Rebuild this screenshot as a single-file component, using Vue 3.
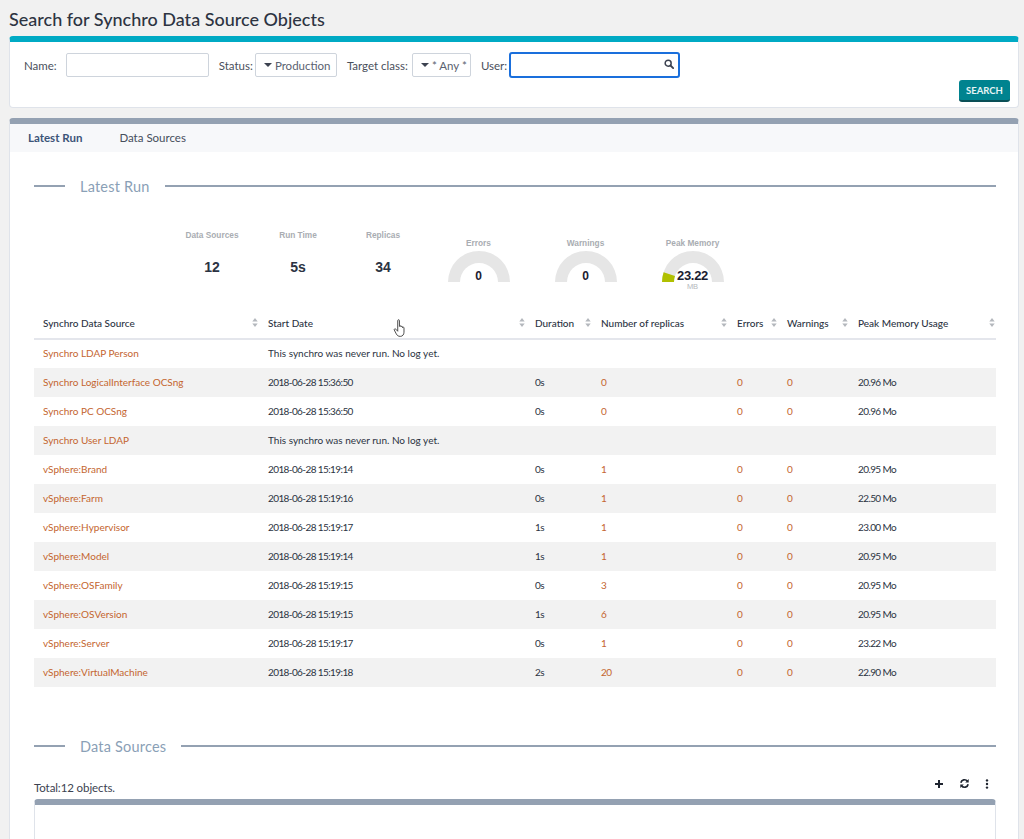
<script setup>
const counters = [
  { label: 'Data Sources', value: '12' },
  { label: 'Run Time', value: '5s' },
  { label: 'Replicas', value: '34' }
]

const gauges = [
  { label: 'Errors', value: '0' },
  { label: 'Warnings', value: '0' },
  { label: 'Peak Memory', value: '23.22', unit: 'MB', fill: true }
]

const columns = ['Synchro Data Source', 'Start Date', 'Duration', 'Number of replicas', 'Errors', 'Warnings', 'Peak Memory Usage']

const rows = [
  { name: 'Synchro LDAP Person', never: true },
  { name: 'Synchro LogicalInterface OCSng', date: '2018-06-28 15:36:50', time: '0s', replicas: 0, memory: '20.96 Mo' },
  { name: 'Synchro PC OCSng', date: '2018-06-28 15:36:50', time: '0s', replicas: 0, memory: '20.96 Mo' },
  { name: 'Synchro User LDAP', never: true },
  { name: 'vSphere:Brand', date: '2018-06-28 15:19:14', time: '0s', replicas: 1, memory: '20.95 Mo' },
  { name: 'vSphere:Farm', date: '2018-06-28 15:19:16', time: '0s', replicas: 1, memory: '22.50 Mo' },
  { name: 'vSphere:Hypervisor', date: '2018-06-28 15:19:17', time: '1s', replicas: 1, memory: '23.00 Mo' },
  { name: 'vSphere:Model', date: '2018-06-28 15:19:14', time: '1s', replicas: 1, memory: '20.95 Mo' },
  { name: 'vSphere:OSFamily', date: '2018-06-28 15:19:15', time: '0s', replicas: 3, memory: '20.95 Mo' },
  { name: 'vSphere:OSVersion', date: '2018-06-28 15:19:15', time: '1s', replicas: 6, memory: '20.95 Mo' },
  { name: 'vSphere:Server', date: '2018-06-28 15:19:17', time: '0s', replicas: 1, memory: '23.22 Mo' },
  { name: 'vSphere:VirtualMachine', date: '2018-06-28 15:19:18', time: '2s', replicas: 20, memory: '22.90 Mo' }
]
</script>

<template>
  <div class="page">
    <h1 class="title">Search for Synchro Data Source Objects</h1>

    <form class="search-card" @submit.prevent>
      <div class="criteria">
        <label class="crit crit-name">Name:<span class="input name-input"></span></label>
        <label class="crit crit-status">Status:<span class="input select status-select"><i class="caret"></i>Production</span></label>
        <label class="crit crit-class">Target class:<span class="input select class-select"><i class="caret"></i>* Any *</span></label>
        <label class="crit crit-user">User:<span class="input user-input">
          <svg class="lens" viewBox="0 0 12 12" width="10" height="10">
            <circle cx="5" cy="5" r="3.6" fill="none" stroke="#3c4250" stroke-width="1.8" />
            <path d="M7.8 7.8 11 11" stroke="#3c4250" stroke-width="2.2" stroke-linecap="round" />
          </svg>
        </span></label>
      </div>
      <div class="search-actions">
        <button type="submit" class="search-btn">SEARCH</button>
      </div>
    </form>

    <section class="main-card">
      <nav class="tabs">
        <span class="tab active">Latest Run</span>
        <span class="tab">Data Sources</span>
      </nav>

      <div class="tab-body">
        <div class="legend"><span>Latest Run</span></div>

        <div class="stats">
          <div v-for="c in counters" :key="c.label" class="counter">
            <div class="stat-label">{{ c.label }}</div>
            <div class="counter-value">{{ c.value }}</div>
          </div>
          <div v-for="g in gauges" :key="g.label" class="gauge">
            <div class="stat-label">{{ g.label }}</div>
            <div class="gauge-dial">
              <svg viewBox="0 0 62 31" width="62" height="31">
                <path d="M0 31A31 31 0 0 1 62 31H50A19 19 0 0 0 12 31Z" fill="#e6e6e6" />
                <path v-if="g.fill" d="M0 31A31 31 0 0 1 1.6 21.2L13 25A19 19 0 0 0 12 31Z" fill="#b0c000" />
              </svg>
              <span class="gauge-value" :class="{ big: g.fill }">{{ g.value }}</span>
            </div>
            <div v-if="g.unit" class="gauge-unit">{{ g.unit }}</div>
          </div>
        </div>

        <table class="runs">
          <thead>
            <tr>
              <th v-for="col in columns" :key="col">
                {{ col }}
                <svg class="sort" viewBox="0 0 6 10" width="6" height="9">
                  <path d="M3 0 6 4H0ZM3 10 0 6H6Z" fill="#b4b8bd" />
                </svg>
              </th>
            </tr>
          </thead>
          <tbody>
            <tr v-for="row in rows" :key="row.name">
              <td><a class="link">{{ row.name }}</a></td>
              <template v-if="row.never">
                <td>This synchro was never run. No log yet.</td>
                <td></td><td></td><td></td><td></td><td></td>
              </template>
              <template v-else>
                <td class="num">{{ row.date }}</td>
                <td class="num">{{ row.time }}</td>
                <td class="num"><a class="link">{{ row.replicas }}</a></td>
                <td class="num"><a class="link">0</a></td>
                <td class="num"><a class="link">0</a></td>
                <td class="num">{{ row.memory }}</td>
              </template>
            </tr>
          </tbody>
        </table>

        <div class="legend second"><span>Data Sources</span></div>

        <div class="list-head">
          <span class="total">Total:12 objects.</span>
          <div class="toolkit">
            <svg viewBox="0 0 10 10" width="10" height="10">
              <path d="M5 1v8M1 5h8" stroke="#1f2530" stroke-width="2" />
            </svg>
            <svg viewBox="0 0 12 12" width="11" height="11">
              <path d="M2 5.2A4.1 4.1 0 0 1 9.2 3.4M10 6.8A4.1 4.1 0 0 1 2.8 8.6" fill="none" stroke="#1f2530" stroke-width="1.8" />
              <path d="M10.6 1v4H6.8ZM1.4 11V7h3.8Z" fill="#1f2530" />
            </svg>
            <svg viewBox="0 0 4 10" width="4" height="10">
              <circle cx="2" cy="1.4" r="1.2" fill="#1f2530" />
              <circle cx="2" cy="5" r="1.2" fill="#1f2530" />
              <circle cx="2" cy="8.6" r="1.2" fill="#1f2530" />
            </svg>
          </div>
        </div>
        <div class="list-panel"></div>
      </div>

      <svg class="pointer" viewBox="0 0 14 20" width="14" height="19">
        <path d="M4.6 1.6c0-1.1 1.8-1.1 1.8 0v6.2c0-1 1.6-1 1.6 0v.6c0-1 1.6-1 1.6 0v.8c0-.9 1.6-.9 1.6.1v4.6c0 2.4-1.4 4.4-3.9 4.4-2.2 0-3.3-1-4.2-2.6L1 11.6c-.5-1 .8-1.8 1.6-.9l2 2.2Z" fill="#fff" stroke="#444" stroke-width="1" stroke-linejoin="round" />
      </svg>
    </section>
  </div>
</template>

<style>
html, body {
  margin: 0;
  background: #f1f1f1;
  overflow: hidden;
}
</style>

<style scoped>
.page {
  height: 839px;
  overflow: hidden;
  padding: 0 5px 0 9px;
  font-family: Lato, "Open Sans", sans-serif;
  color: #2b3342;
}

.title {
  margin: 0;
  padding-top: 9px;
  height: 27px;
  font-size: 18px;
  line-height: 20px;
  font-weight: 500;
  color: #2d3442;
}

.search-card {
  height: 72px;
  box-sizing: border-box;
  background: #fff;
  border: 1px solid #dfe3ea;
  border-top: 6px solid #00aac4;
  border-radius: 4px;
  position: relative;
}

.criteria {
  display: flex;
  align-items: center;
  height: 24px;
  padding: 11px 0 0 14px;
  font-size: 11.5px;
  color: #4a505c;
}

.crit {
  display: flex;
  align-items: center;
}

.crit-status { margin-left: 10px; }
.crit-class { margin-left: 10px; }
.crit-user { margin-left: 10px; }

.input {
  display: flex;
  align-items: center;
  box-sizing: border-box;
  height: 24px;
  background: #fff;
  border: 1px solid #ced4dc;
  border-radius: 2px;
  margin-left: 1px;
}

.name-input {
  width: 143px;
  margin-left: 9px;
}

.select {
  color: #5a6270;
  font-size: 11.5px;
}

.status-select { width: 82px; padding-left: 8px; margin-left: 2px; }
.class-select { width: 59px; padding-left: 8px; margin-left: 4px; }

.caret {
  width: 0;
  height: 0;
  margin-right: 3px;
  border-left: 4px solid transparent;
  border-right: 4px solid transparent;
  border-top: 4px solid #3c4250;
}

.user-input {
  width: 171px;
  height: 26px;
  margin-left: 2px;
  border: 2px solid #1a6fdc;
  border-radius: 3px;
  justify-content: flex-end;
  padding: 0 4px 3px 0;
}

.search-actions {
  display: flex;
  justify-content: flex-end;
  padding: 3px 8px 0 0;
}

.search-btn {
  width: 51px;
  height: 22px;
  padding: 0;
  border: none;
  border-bottom: 2px solid #0a4f56;
  border-radius: 3px;
  background: #00838f;
  color: #e6f4f5;
  font-family: inherit;
  font-size: 9.5px;
  font-weight: 700;
}

.main-card {
  position: relative;
  margin-top: 10px;
  background: #fff;
  border: 1px solid #dfe3ea;
  border-top: 6px solid #94a1b2;
  border-radius: 4px 4px 0 0;
  height: 800px;
  box-sizing: border-box;
}

.tabs {
  display: flex;
  align-items: center;
  height: 28px;
  box-sizing: border-box;
  background: #f7f8fa;
  padding: 0 0 1px 18px;
  gap: 37px;
  font-size: 11.5px;
  color: #464e5c;
}

.tab.active {
  font-weight: 700;
  color: #3c5478;
}

.tab-body {
  padding: 24px 22px 0 24px;
}

.legend {
  display: flex;
  align-items: center;
  height: 20px;
  font-size: 14.5px;
  letter-spacing: 0.2px;
  color: #8aa0b6;
}

.legend::before {
  content: '';
  width: 31px;
  height: 2px;
  background: #94a1b2;
  margin-right: 15px;
}

.legend::after {
  content: '';
  flex: 1;
  height: 2px;
  background: #94a1b2;
  margin-left: 15px;
}

.second {
  margin-top: 49px;
}

.stats {
  display: flex;
  align-items: flex-start;
  height: 110px;
  padding: 33px 0 0 135px;
  box-sizing: border-box;
}

.counter {
  width: 86px;
  text-align: center;
}

.counter:nth-child(3) {
  margin-left: -1px;
}

.stat-label {
  font-family: "Liberation Sans", Arial, sans-serif;
  font-size: 8.3px;
  font-weight: 700;
  line-height: 12px;
  color: #a9adb2;
}

.counter-value {
  margin-top: 18px;
  font-family: "Liberation Sans", Arial, sans-serif;
  font-size: 14px;
  font-weight: 700;
  line-height: 16px;
  color: #2b3342;
}

.gauge {
  width: 107px;
  margin-top: 8px;
  text-align: center;
}

.gauge:nth-child(4) {
  margin-left: -1px;
}

.gauge-dial {
  position: relative;
  width: 62px;
  height: 31px;
  margin: 2px auto 0;
}

.gauge-dial svg {
  display: block;
}

.gauge-value {
  position: absolute;
  left: 0;
  right: 0;
  bottom: -1px;
  font-family: "Liberation Sans", Arial, sans-serif;
  font-size: 12px;
  font-weight: 700;
  line-height: 14px;
  color: #1a2030;
}

.gauge-value.big {
  font-size: 13px;
  letter-spacing: -0.3px;
}

.gauge-unit {
  font-family: "Liberation Sans", Arial, sans-serif;
  font-size: 7.5px;
  line-height: 10px;
  color: #b4b8bd;
}

.runs {
  width: 962px;
  border-collapse: collapse;
  table-layout: fixed;
  font-size: 10px;
  color: #2b3342;
}

.runs th:nth-child(1) { width: 225px; }
.runs th:nth-child(2) { width: 267px; }
.runs th:nth-child(3) { width: 66px; }
.runs th:nth-child(4) { width: 136px; }
.runs th:nth-child(5) { width: 50px; }
.runs th:nth-child(6) { width: 71px; }

.runs th {
  position: relative;
  box-sizing: border-box;
  height: 33px;
  padding: 1px 9px 0;
  text-align: left;
  font-weight: 500;
  border-bottom: 2px solid #e4e6ec;
  white-space: nowrap;
}

.sort {
  position: absolute;
  right: 1px;
  top: 12px;
}

.runs td {
  box-sizing: border-box;
  height: 29px;
  padding: 0 9px 2px;
  white-space: nowrap;
}

.runs td.num {
  letter-spacing: -0.6px;
}

.runs tbody tr:nth-child(even) {
  background: #f2f2f2;
}

.link {
  color: #c4652f;
}

.list-head {
  display: flex;
  align-items: flex-end;
  justify-content: space-between;
  height: 43px;
  padding-right: 7px;
  box-sizing: border-box;
  font-size: 11.5px;
}

.toolkit {
  display: flex;
  align-items: center;
  gap: 15px;
  padding-bottom: 10px;
}

.total {
  color: #3c4250;
  letter-spacing: -0.1px;
  padding-bottom: 5px;
}

.list-panel {
  height: 60px;
  border: 1px solid #dfe3ea;
  border-top: 6px solid #94a1b2;
  border-radius: 4px 4px 0 0;
}

.pointer {
  position: absolute;
  left: 383px;
  top: 195px;
}
</style>
